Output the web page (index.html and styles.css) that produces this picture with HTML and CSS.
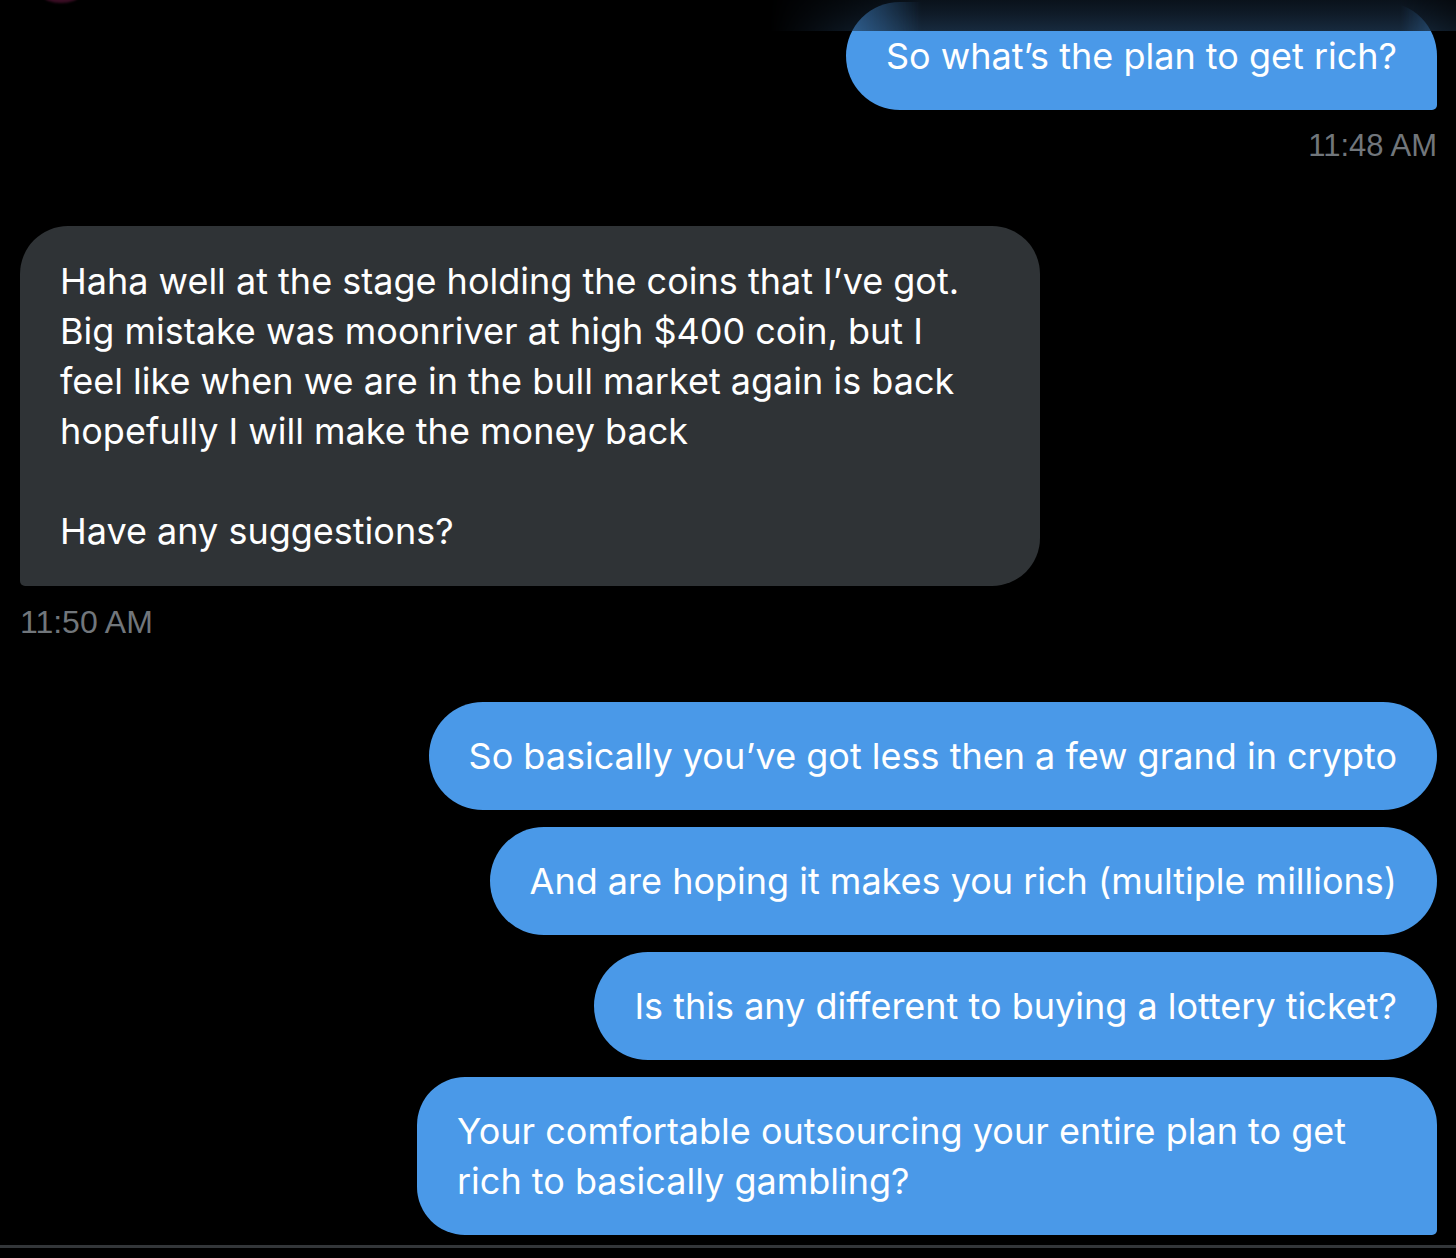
FILE: index.html
```html
<!DOCTYPE html>
<html lang="en">
<head>
<meta charset="utf-8">
<title>Messages</title>
<link rel="stylesheet" href="styles.css">
</head>
<body>
<div class="screen">
  <div class="header-blur"></div>
  <div class="avatar-edge"></div>
  <main class="thread">
    <div class="group group-out first-group">
      <div class="bubble out last">So what’s the plan to get rich?</div>
      <div class="time time-out">11:48 AM</div>
    </div>

    <div class="group group-in">
      <div class="bubble in last">Haha well at the stage holding the coins that I’ve got.<br>Big mistake was moonriver at high $400 coin, but I<br>feel like when we are in the bull market again is back<br>hopefully I will make the money back<br><br>Have any suggestions?</div>
      <div class="time time-in">11:50 AM</div>
    </div>

    <div class="group group-out">
      <div class="bubble out">So basically you’ve got less then a few grand in crypto</div>
      <div class="bubble out">And are hoping it makes you rich (multiple millions)</div>
      <div class="bubble out">Is this any different to buying a lottery ticket?</div>
      <div class="bubble out last wide">Your comfortable outsourcing your entire plan to get<br>rich to basically gambling?</div>
    </div>
  </main>
  <div class="composer-line"></div>
</div>
</body>
</html>
```

FILE: styles.css
```css
html, body {
  margin: 0;
  padding: 0;
  background: #000;
}

.screen {
  position: relative;
  width: 1456px;
  height: 1258px;
  overflow: hidden;
  background: #000;
  font-family: "Inter", "Noto Sans", sans-serif;
  color: #fff;
}

.header-blur {
  position: absolute;
  top: 0;
  left: 770px;
  right: 0;
  height: 31px;
  background: linear-gradient(180deg, #0a121b 0%, #0f1b28 45%, #172a3e 100%);
  -webkit-mask-image: linear-gradient(90deg, rgba(0,0,0,0) 0%, rgba(0,0,0,1) 22%, rgba(0,0,0,1) 92%, rgba(0,0,0,0.55) 100%);
  mask-image: linear-gradient(90deg, rgba(0,0,0,0) 0%, rgba(0,0,0,1) 22%, rgba(0,0,0,1) 92%, rgba(0,0,0,0.55) 100%);
  z-index: 2;
}

.avatar-edge {
  position: absolute;
  top: -10px;
  left: 44px;
  width: 34px;
  height: 13px;
  border-radius: 50%;
  background: #3a0d24;
  filter: blur(1px);
  z-index: 2;
}

.thread {
  display: flex;
  flex-direction: column;
  padding: 2px 19px 0 20px;
}

.group {
  display: flex;
  flex-direction: column;
  gap: 17px;
}

.group-out {
  align-items: flex-end;
}

.group-in {
  align-items: flex-start;
  margin-top: 60px;
}

.group-in + .group-out {
  margin-top: 60px;
}

.bubble {
  max-width: 940px;
  padding: 29px 40px;
  font-size: 36px;
  line-height: 50px;
  letter-spacing: 0;
  border-radius: 54px;
  white-space: nowrap;
}

.bubble.out {
  background: #4a99e8;
  color: #fff;
}

.bubble.out.last {
  border-bottom-right-radius: 5px;
}

.bubble.out.wide {
  width: 940px;
  border-radius: 48px 48px 5px 48px;
}

.bubble.in {
  background: #2f3336;
  color: #fff;
  width: 940px;
  padding: 30px 40px;
  border-radius: 48px 48px 48px 5px;
}

.time {
  font-family: "Liberation Sans", Arial, sans-serif;
  font-size: 31px;
  line-height: 40px;
  color: #71767b;
  margin-top: -1px;
}

.time-in {
  font-size: 32px;
}

.composer-line {
  position: absolute;
  left: 0;
  right: 0;
  top: 1245px;
  height: 3px;
  background: #333639;
}
```
